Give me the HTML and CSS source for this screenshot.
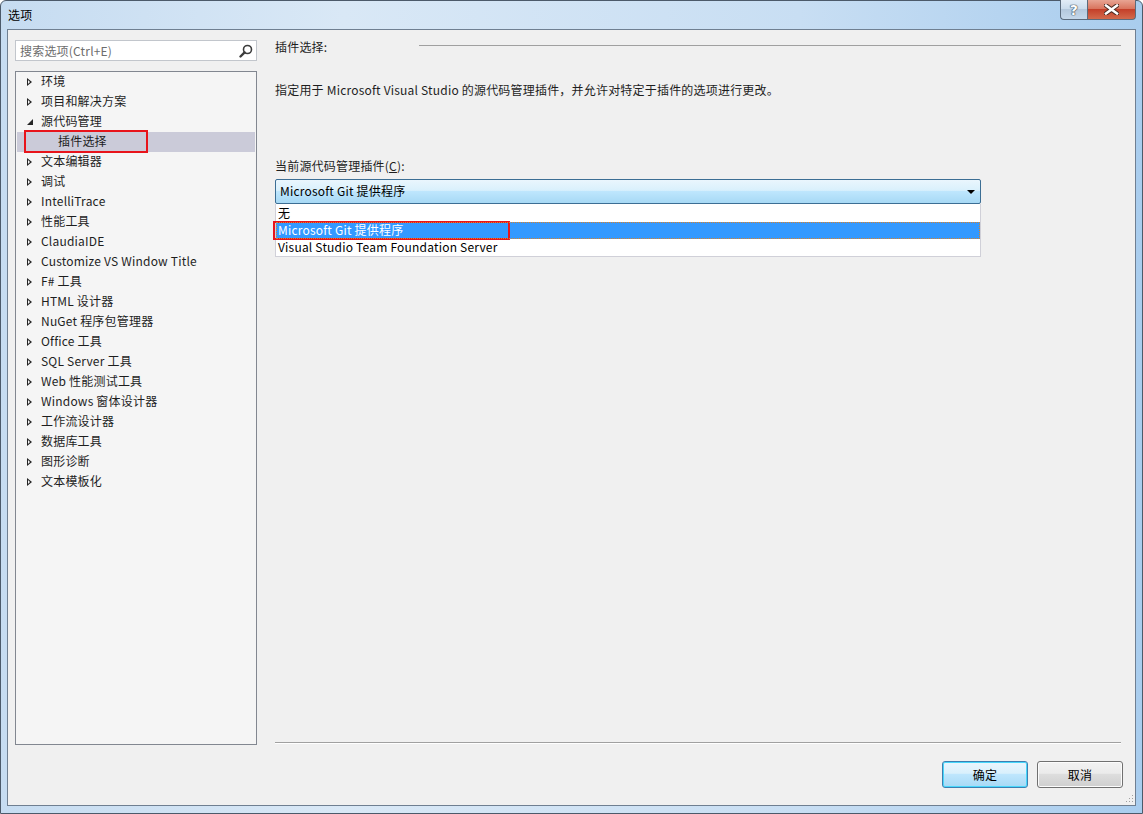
FILE: index.html
```html
<!DOCTYPE html>
<html lang="zh-CN">

<head>
    <meta charset="UTF-8">
    <title>选项</title>
    <link rel="stylesheet" href="styles.css">
</head>

<body>
    <div class="window">
        <!-- Title bar -->
        <div class="titlebar">
            <span class="title">选项</span>
            <div class="caption-btns">
                <div class="cap-btn help-btn">?</div>
                <div class="cap-btn close-btn">
                    <svg width="15" height="11" viewBox="0 0 15 11">
                        <path d="M2 1.5 L13 9.5 M13 1.5 L2 9.5" stroke="#4a2a22" stroke-width="4.5" stroke-linecap="square" />
                        <path d="M2 1.5 L13 9.5 M13 1.5 L2 9.5" stroke="#ffffff" stroke-width="2.5" stroke-linecap="square" />
                    </svg>
                </div>
            </div>
        </div>

        <div class="client">
            <div class="main">
                <!-- Left: search + tree -->
                <div class="sidebar">
                    <div class="search-box">
                        <span class="search-hint">搜索选项(Ctrl+E)</span>
                        <svg class="search-icon" width="14" height="14" viewBox="0 0 14 14">
                            <circle cx="8.5" cy="5.5" r="4" fill="none" stroke="#3c3c3c" stroke-width="1.6" />
                            <path d="M5.6 8.4 L1.5 12.5" stroke="#3c3c3c" stroke-width="2.4" stroke-linecap="round" />
                        </svg>
                    </div>
                    <div class="tree">
                        <div class="tree-row"><span class="arrow"></span>环境</div>
                        <div class="tree-row"><span class="arrow"></span>项目和解决方案</div>
                        <div class="tree-row"><span class="arrow open"></span>源代码管理</div>
                        <div class="tree-row child selected"><span class="mark">插件选择</span></div>
                        <div class="tree-row"><span class="arrow"></span>文本编辑器</div>
                        <div class="tree-row"><span class="arrow"></span>调试</div>
                        <div class="tree-row"><span class="arrow"></span>IntelliTrace</div>
                        <div class="tree-row"><span class="arrow"></span>性能工具</div>
                        <div class="tree-row"><span class="arrow"></span>ClaudiaIDE</div>
                        <div class="tree-row"><span class="arrow"></span>Customize VS Window Title</div>
                        <div class="tree-row"><span class="arrow"></span>F# 工具</div>
                        <div class="tree-row"><span class="arrow"></span>HTML 设计器</div>
                        <div class="tree-row"><span class="arrow"></span>NuGet 程序包管理器</div>
                        <div class="tree-row"><span class="arrow"></span>Office 工具</div>
                        <div class="tree-row"><span class="arrow"></span>SQL Server 工具</div>
                        <div class="tree-row"><span class="arrow"></span>Web 性能测试工具</div>
                        <div class="tree-row"><span class="arrow"></span>Windows 窗体设计器</div>
                        <div class="tree-row"><span class="arrow"></span>工作流设计器</div>
                        <div class="tree-row"><span class="arrow"></span>数据库工具</div>
                        <div class="tree-row"><span class="arrow"></span>图形诊断</div>
                        <div class="tree-row"><span class="arrow"></span>文本模板化</div>
                    </div>
                </div>

                <!-- Right: page content -->
                <div class="panel">
                    <div class="group-head">
                        <span>插件选择:</span>
                        <div class="group-line"></div>
                    </div>
                    <p class="desc">指定用于 Microsoft Visual Studio 的源代码管理插件，并允许对特定于插件的选项进行更改。</p>

                    <div class="field-label">当前源代码管理插件(<u>C</u>):</div>
                    <div class="combo">
                        <span>Microsoft Git 提供程序</span>
                        <span class="combo-arrow"></span>
                    </div>
                    <div class="combo-list">
                        <div class="opt">无</div>
                        <div class="opt active"><span class="mark">Microsoft Git 提供程序</span></div>
                        <div class="opt">Visual Studio Team Foundation Server</div>
                    </div>

                    <div class="bottom-line"></div>
                </div>
            </div>

            <!-- Footer buttons -->
            <div class="footer">
                <button class="btn default">确定</button>
                <button class="btn">取消</button>
                <span class="grip"></span>
            </div>
        </div>
    </div>
</body>

</html>
```

FILE: styles.css
```css
* {
    margin: 0;
    padding: 0;
    box-sizing: border-box;
}

body {
    width: 1143px;
    height: 814px;
    overflow: hidden;
    font-family: "Noto Sans CJK SC", "Noto Sans", sans-serif;
    font-size: 12px;
    letter-spacing: 0.2px;
    color: #000;
    background: #fff;
}

.window {
    width: 1143px;
    height: 814px;
    display: flex;
    flex-direction: column;
    padding: 0 6px 7px 6px;
    border: 1px solid #4c5a6a;
    border-radius: 6px 6px 0 0;
    background: linear-gradient(90deg, #c6dcf1 0%, #d9e8f6 30%, #c8def3 70%, #a9cdee 100%);
}

/* ---------- title bar ---------- */
.titlebar {
    height: 28px;
    display: flex;
    align-items: flex-start;
    justify-content: space-between;
    flex-shrink: 0;
}

.title {
    margin-top: 6px;
    margin-left: 1px;
    line-height: 16px;
}

.caption-btns {
    display: flex;
    margin-top: -1px;
}

.cap-btn {
    height: 20px;
    display: flex;
    align-items: center;
    justify-content: center;
    border: 1px solid #5b6b7c;
    border-top: none;
}

.help-btn {
    width: 27px;
    border-radius: 0 0 0 4px;
    border-right: none;
    background: linear-gradient(#e2ecf6 0%, #cbdcec 45%, #b4c8dc 50%, #c5d8ea 100%);
    font-family: "DejaVu Sans", sans-serif;
    font-weight: bold;
    font-size: 14px;
    color: #fff;
    text-shadow: 0 0 1px #30404f, 0 0 1px #30404f, 0 0 1px #30404f;
}

.close-btn {
    width: 49px;
    border-radius: 0 0 4px 0;
    background: linear-gradient(#e8a493 0%, #d9755f 45%, #c4402a 50%, #d26a4c 100%);
}

/* ---------- client area ---------- */
.client {
    flex: 1;
    display: flex;
    flex-direction: column;
    background: #f0f0f0;
    border: 1px solid #6f7f91;
}

.main {
    height: 715px;
    display: flex;
    gap: 18px;
    padding: 10px 14px 0 7px;
}

.sidebar {
    width: 242px;
    display: flex;
    flex-direction: column;
    gap: 10px;
}

.search-box {
    height: 21px;
    display: flex;
    align-items: center;
    justify-content: space-between;
    padding: 0 3px 0 4px;
    background: #fff;
    border: 1px solid #c2c6cc;
}

.search-hint {
    color: #6d6d6d;
    line-height: 16px;
}

.tree {
    flex: 1;
    background: #f5f5f5;
    border: 1px solid #828790;
    padding: 0 1px;
}

.tree-row {
    height: 20px;
    display: flex;
    align-items: center;
    padding: 0 0 2px 10px;
    line-height: 16px;
    color: #1e1e1e;
    white-space: nowrap;
}

.arrow {
    width: 14px;
    height: 8px;
    flex-shrink: 0;
    position: relative;
}

.arrow::before {
    content: "";
    position: absolute;
    left: 0;
    top: 1px;
    border-style: solid;
    border-width: 4px 0 4px 5px;
    border-color: transparent transparent transparent #222;
}

.arrow::after {
    content: "";
    position: absolute;
    left: 1px;
    top: 3px;
    border-style: solid;
    border-width: 2px 0 2px 2.5px;
    border-color: transparent transparent transparent #f5f5f5;
}

.arrow.open::before {
    top: 2px;
    border-width: 0 0 6px 6px;
    border-color: transparent transparent #262626 transparent;
}

.arrow.open::after {
    display: none;
}

.tree-row.child {
    padding: 0 0 0 7px;
}

.tree-row.selected {
    background: #cbcbd9;
}

.tree-row.selected .mark {
    width: 124px;
    height: 23px;
    display: flex;
    align-items: center;
    padding: 0 0 2px 32px;
    margin-top: -1px;
    border: 2px solid #e8141b;
}

/* ---------- right panel ---------- */
.panel {
    flex: 1;
    display: flex;
    flex-direction: column;
}

.group-head {
    height: 14px;
    display: flex;
    align-items: center;
    line-height: 14px;
    color: #1e1e1e;
}

.group-head span {
    width: 144px;
}

.group-line {
    flex: 1;
    height: 1px;
    margin-top: -3px;
    background: #a0a0a0;
}

.desc {
    margin-top: 28px;
    line-height: 16px;
    color: #1e1e1e;
}

.field-label {
    margin-top: 60px;
    line-height: 16px;
    color: #1e1e1e;
}

.field-label u {
    text-underline-offset: 1px;
}

.combo {
    width: 706px;
    height: 25px;
    margin-top: 5px;
    display: flex;
    align-items: center;
    justify-content: space-between;
    padding: 0 5px 1px 4px;
    border: 1px solid #3c6e94;
    border-radius: 2px;
    background: linear-gradient(#eaf6fd 0%, #d9f0fc 45%, #bee6fd 50%, #a7d9f5 100%);
    line-height: 16px;
}

.combo-arrow {
    border-style: solid;
    border-width: 4px 4px 0 4px;
    border-color: #000 transparent transparent transparent;
    margin-top: 2px;
}

.combo-list {
    width: 706px;
    background: #fff;
    border: 1px solid #d0d0d8;
    border-top: none;
}

.opt {
    height: 17px;
    display: flex;
    align-items: center;
    padding: 0 0 1px 2px;
    line-height: 16px;
}

.opt:first-child {
    height: 18px;
}

.opt.active {
    background: #3399ff;
    color: #fff;
    outline: 1px dotted #d9822b;
    outline-offset: -1px;
    padding: 0;
}

.opt.active .mark {
    width: 237px;
    height: 19px;
    margin-left: -3px;
    padding: 0 0 1px 3px;
    display: flex;
    align-items: center;
    border: 2px solid #e8141b;
}

.bottom-line {
    margin-top: auto;
    height: 2px;
    border-top: 1px solid #a0a0a0;
    border-bottom: 1px solid #fff;
    margin-bottom: 1px;
}

/* ---------- footer ---------- */
.footer {
    flex: 1;
    display: flex;
    justify-content: flex-end;
    align-items: flex-start;
    gap: 9px;
    padding: 16px 12px 0 0;
    position: relative;
}

.btn {
    width: 86px;
    height: 27px;
    font-family: inherit;
    font-size: 12px;
    letter-spacing: inherit;
    color: #000;
    border: 1px solid #707070;
    border-radius: 3px;
    background: linear-gradient(#f2f2f2 0%, #ebebeb 45%, #dddddd 50%, #cfcfcf 100%);
    box-shadow: inset 0 0 0 1px #fcfcfc;
}

.btn.default {
    border-color: #3c7fb1;
    background: linear-gradient(#eaf6fd 0%, #d9f0fc 45%, #bee6fd 50%, #a7d9f5 100%);
    box-shadow: inset 0 0 0 1px #48d7fb;
}

.grip {
    position: absolute;
    right: 2px;
    bottom: 3px;
    width: 8px;
    height: 8px;
    background: radial-gradient(circle, #a0a0a0 0.8px, transparent 1px) 0 0 / 3px 3px;
    clip-path: polygon(100% 0, 100% 100%, 0 100%);
}
```
